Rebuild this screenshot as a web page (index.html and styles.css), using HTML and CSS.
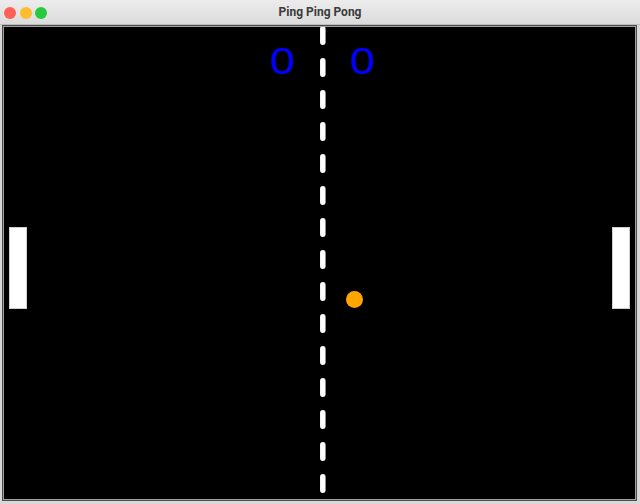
FILE: index.html
```html
<!DOCTYPE html>
<html>
<head>
<meta charset="utf-8">
<title>Ping Ping Pong</title>
<link rel="stylesheet" href="styles.css">
</head>
<body>
<div class="window">
  <div class="titlebar">
    <div class="lights">
      <span class="light red"></span>
      <span class="light yellow"></span>
      <span class="light green"></span>
    </div>
    <div class="title">Ping Ping Pong</div>
  </div>
  <div class="frame">
    <div class="field">
      <svg class="court" width="631" height="472" viewBox="0 0 631 472">
        <line class="net" x1="318.8" y1="1.75" x2="318.8" y2="472"/>
        <text class="score" x="278.5" y="47" textLength="25" lengthAdjust="spacingAndGlyphs">0</text>
        <text class="score" x="358.5" y="47" textLength="25" lengthAdjust="spacingAndGlyphs">0</text>
        <rect class="paddle" x="5.5" y="200.5" width="17" height="81"/>
        <rect class="paddle" x="608.5" y="200.5" width="17" height="81"/>
        <circle class="ball" cx="350.5" cy="272.5" r="8.5"/>
      </svg>
    </div>
  </div>
</div>
</body>
</html>
```

FILE: styles.css
```css
html, body {
  margin: 0;
  padding: 0;
  background: #e4e4e4;
}

.window {
  width: 640px;
  height: 504px;
  display: flex;
  flex-direction: column;
  background: #dcdcdc;
  overflow: hidden;
}

.titlebar {
  height: 24px;
  flex: 0 0 24px;
  border-bottom: 1px solid #bdbdbd;
  background: linear-gradient(#ececec, #dcdcdc);
  position: relative;
  display: flex;
  align-items: center;
}

.lights {
  display: flex;
  gap: 3.5px;
  margin-left: 4px;
  margin-top: 1px;
}

.light {
  width: 12px;
  height: 12px;
  border-radius: 50%;
  display: block;
}

.red { background: #fe5f57; }
.yellow { background: #febc2e; }
.green { background: #28c840; }

.title {
  position: absolute;
  left: 0;
  right: 0;
  top: 0;
  height: 24px;
  line-height: 25px;
  text-align: center;
  font-family: Roboto, "Liberation Sans", sans-serif;
  font-weight: 700;
  font-size: 12px;
  color: #3b3b3b;
}

.frame {
  flex: 1;
  padding: 0 3px 3px 2px;
  background: #d8d8d8;
  display: flex;
}

.field {
  border: 1px solid #4c4c4c;
  padding: 1px;
  background: #a0a0a0;
  display: flex;
}

.court {
  display: block;
  background: #000;
}

.net {
  stroke: #fff;
  stroke-width: 5.5;
  stroke-linecap: round;
  stroke-dasharray: 13.5 18.5;
}

.score {
  fill: #0000ff;
  font-family: "Liberation Sans", Arial, sans-serif;
  font-size: 37px;
  text-anchor: middle;
}

.paddle {
  fill: #fff;
  stroke: #cfcfcf;
  stroke-width: 1;
}

.ball {
  fill: #ffa500;
}
```
